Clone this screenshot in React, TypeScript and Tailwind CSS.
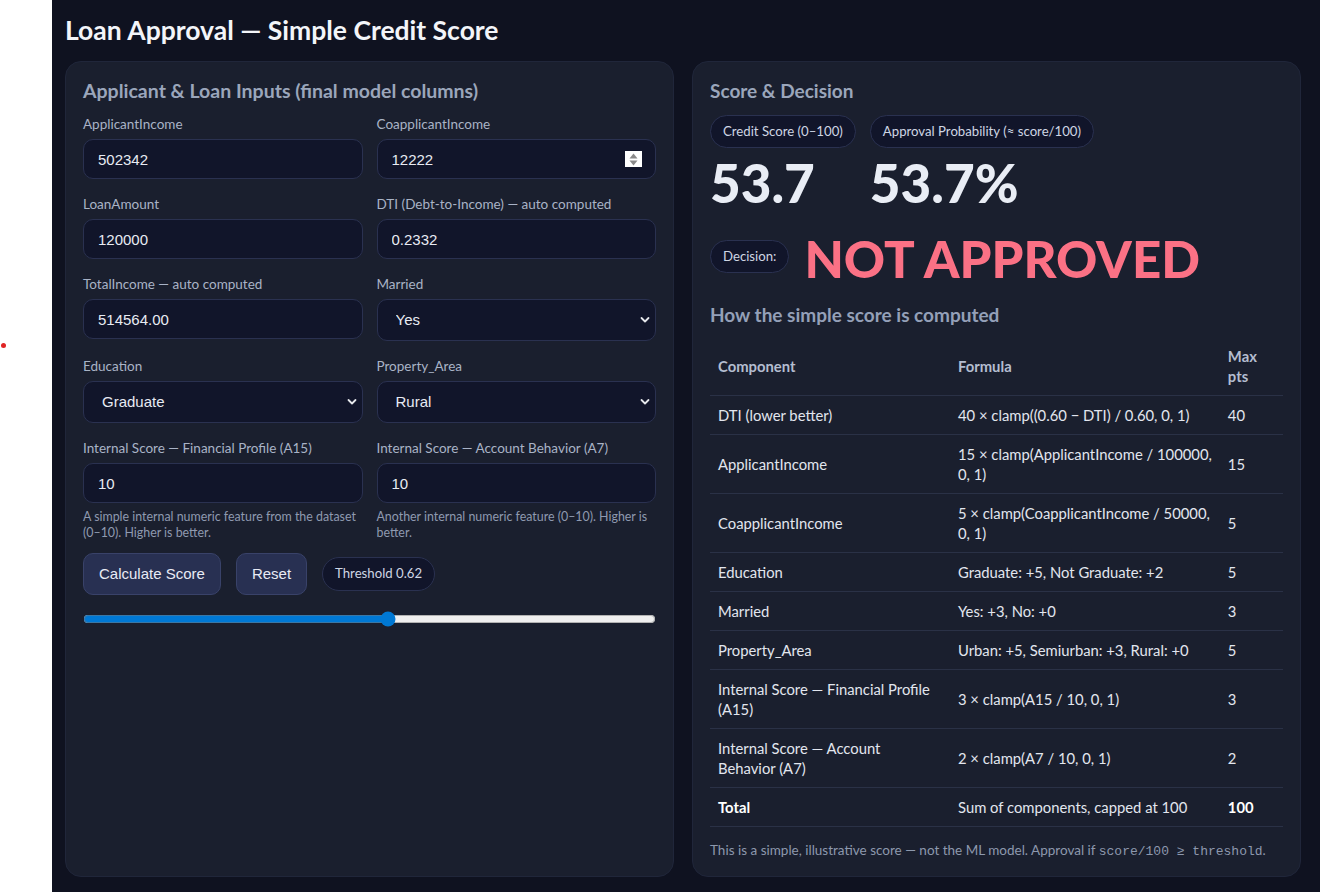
import { useState } from "react";

const sans = "font-['Lato','Noto_Sans',sans-serif]";
const ctrl = "font-['Liberation_Sans',Arial,sans-serif]";

const labelClass = "block text-[13.5px] leading-[18px] text-[#a9b3c6]";
const inputClass = `${ctrl} block h-10 w-full rounded-[10px] border border-[#2a3150] bg-[#11152a] px-[14px] text-[15px] text-[#e8ebf3] outline-none`;
const pillClass = "rounded-full border border-[#2a3150] bg-[#11152a] px-3 text-[13.2px] text-[#cfd6e4]";

const rows: { component: React.ReactNode; formula: React.ReactNode; max: string; total?: boolean }[] = [
  { component: "DTI (lower better)", formula: "40 × clamp((0.60 − DTI) / 0.60, 0, 1)", max: "40" },
  {
    component: "ApplicantIncome",
    formula: (
      <>
        15 × clamp(ApplicantIncome / 100000,
        <br />
        0, 1)
      </>
    ),
    max: "15",
  },
  {
    component: "CoapplicantIncome",
    formula: (
      <>
        5 × clamp(CoapplicantIncome / 50000,
        <br />
        0, 1)
      </>
    ),
    max: "5",
  },
  { component: "Education", formula: "Graduate: +5, Not Graduate: +2", max: "5" },
  { component: "Married", formula: "Yes: +3, No: +0", max: "3" },
  { component: "Property_Area", formula: "Urban: +5, Semiurban: +3, Rural: +0", max: "5" },
  {
    component: (
      <>
        Internal Score — Financial Profile
        <br />
        (A15)
      </>
    ),
    formula: "3 × clamp(A15 / 10, 0, 1)",
    max: "3",
  },
  {
    component: (
      <>
        Internal Score — Account
        <br />
        Behavior (A7)
      </>
    ),
    formula: "2 × clamp(A7 / 10, 0, 1)",
    max: "2",
  },
  { component: "Total", formula: "Sum of components, capped at 100", max: "100", total: true },
];

function Field({ label, children }: { label: string; children: React.ReactNode }) {
  return (
    <div>
      <label className={labelClass}>{label}</label>
      <div className="mt-1.5">{children}</div>
    </div>
  );
}

function Select({ value, options }: { value: string; options: string[] }) {
  return (
    <div className="relative">
      <select
        defaultValue={value}
        className={`${ctrl} block h-[42px] w-full appearance-none rounded-[10px] border border-[#2a3150] bg-[#11152a] pl-[18px] text-[15px] text-[#e8ebf3] outline-none`}
      >
        {options.map((o) => (
          <option key={o}>{o}</option>
        ))}
      </select>
      <svg
        className="pointer-events-none absolute right-[6px] top-1/2 -translate-y-1/2"
        width="10"
        height="7"
        viewBox="0 0 10 7"
        fill="none"
      >
        <path d="M1.5 1.5 5 5l3.5-3.5" stroke="#e5e7eb" strokeWidth="1.8" strokeLinecap="round" strokeLinejoin="round" />
      </svg>
    </div>
  );
}

export default function App() {
  const [threshold, setThreshold] = useState(0.62);

  return (
    <div className={`flex min-h-screen ${sans}`}>
      <div className="relative w-[52px] shrink-0 bg-white">
        <span className="absolute left-[1px] top-[343px] h-[5px] w-[5px] rounded-full bg-[#e02424]" />
      </div>

      <main className="flex-1 bg-[#0f1220] pb-[17px] pl-[13px] pr-[19px] pt-[15px]">
        <h1 className="text-[26.5px] font-bold leading-[30px] text-[#f3f5f9]">
          Loan Approval — Simple Credit Score
        </h1>

        <div className="mt-4 grid grid-cols-2 gap-[18px]">
          <section className="rounded-[16px] border border-[#20263a] bg-[#1a1f2e] p-[17px]">
            <h2 className="text-[19.5px] font-bold leading-6 text-[#9ba6bb]">
              Applicant &amp; Loan Inputs (final model columns)
            </h2>

            <div className="mt-3 grid grid-cols-2 items-start gap-x-[14px] gap-y-4">
              <Field label="ApplicantIncome">
                <input className={inputClass} defaultValue="502342" />
              </Field>
              <Field label="CoapplicantIncome">
                <div className="relative">
                  <input className={inputClass} defaultValue="12222" />
                  <span className="absolute right-[14px] top-1/2 flex h-4 w-[17px] -translate-y-1/2 items-center justify-center bg-white">
                    <svg width="9" height="13" viewBox="0 0 9 13">
                      <path d="M4.5 0.5 8.5 5.5H0.5Z" fill="#8a8a8a" />
                      <path d="M4.5 12.5 8.5 7.5H0.5Z" fill="#8a8a8a" />
                    </svg>
                  </span>
                </div>
              </Field>
              <Field label="LoanAmount">
                <input className={inputClass} defaultValue="120000" />
              </Field>
              <Field label="DTI (Debt-to-Income) — auto computed">
                <input className={inputClass} defaultValue="0.2332" readOnly />
              </Field>
              <Field label="TotalIncome — auto computed">
                <input className={inputClass} defaultValue="514564.00" readOnly />
              </Field>
              <Field label="Married">
                <Select value="Yes" options={["Yes", "No"]} />
              </Field>
              <Field label="Education">
                <Select value="Graduate" options={["Graduate", "Not Graduate"]} />
              </Field>
              <Field label="Property_Area">
                <Select value="Rural" options={["Urban", "Semiurban", "Rural"]} />
              </Field>
              <Field label="Internal Score — Financial Profile (A15)">
                <input className={inputClass} defaultValue="10" />
                <p className="mt-1.5 text-[12.4px] leading-4 text-[#8f9ab0]">
                  A simple internal numeric feature from the dataset (0–10). Higher is better.
                </p>
              </Field>
              <Field label="Internal Score — Account Behavior (A7)">
                <input className={inputClass} defaultValue="10" />
                <p className="mt-1.5 text-[12.4px] leading-4 text-[#8f9ab0]">
                  Another internal numeric feature (0–10). Higher is better.
                </p>
              </Field>
            </div>

            <div className="mt-3 flex items-center gap-[15px]">
              <button className={`${ctrl} h-[42px] rounded-[10px] border border-[#394269] bg-[#283052] px-[15px] text-[15px] text-[#e8ebf5]`}>
                Calculate Score
              </button>
              <button className={`${ctrl} h-[42px] rounded-[10px] border border-[#394269] bg-[#283052] px-[15px] text-[15px] text-[#e8ebf5]`}>
                Reset
              </button>
              <span className={`${pillClass} flex h-[34px] items-center`}>Threshold {threshold.toFixed(2)}</span>
            </div>

            <input
              type="range"
              min={0.3}
              max={0.9}
              step={0.01}
              value={threshold}
              onChange={(e) => setThreshold(Number(e.target.value))}
              className="mt-4 block w-full accent-[#0078d4]"
            />
          </section>

          <section className="rounded-[16px] border border-[#20263a] bg-[#1a1f2e] p-[17px]">
            <h2 className="text-[19px] font-bold leading-6 text-[#9ba6bb]">Score &amp; Decision</h2>

            <div className="mt-3 flex gap-[14px]">
              <div className="flex flex-col items-start">
                <span className={`${pillClass} py-[7px] leading-[17px]`}>Credit Score (0–100)</span>
                <div className="mt-2 text-[53px] font-black leading-none text-[#e9edf5]">53.7</div>
              </div>
              <div className="flex flex-col items-start">
                <span className={`${pillClass} py-[7px] leading-[17px]`}>Approval Probability (≈ score/100)</span>
                <div className="mt-2 text-[53px] font-black leading-none text-[#e9edf5]">53.7%</div>
              </div>
            </div>

            <div className="mt-[22px] flex items-center gap-[15px]">
              <span className={`${pillClass} py-[7px] leading-[17px]`}>Decision:</span>
              <span className="relative top-[2px] text-[51px] font-black leading-none text-[#fb7185]">NOT APPROVED</span>
            </div>

            <h3 className="mt-[22px] text-[19px] font-bold leading-[22px] text-[#94a0b8]">
              How the simple score is computed
            </h3>

            <table className="mt-[11px] w-full border-collapse text-left text-[14.8px] leading-5">
              <thead>
                <tr className="border-b border-[#2a3146] text-[#b4bdd0]">
                  <th className="w-[240px] px-2 py-[9px] font-bold">Component</th>
                  <th className="w-[269px] px-2 py-[9px] font-bold">Formula</th>
                  <th className="px-2 py-[9px] font-bold">
                    Max
                    <br />
                    pts
                  </th>
                </tr>
              </thead>
              <tbody className="text-[#e2e6ee]">
                {rows.map((r, i) => (
                  <tr key={i} className="border-b border-[#2a3146]">
                    <td className={`whitespace-nowrap px-2 py-[9px] ${r.total ? "font-bold text-white" : ""}`}>
                      {r.component}
                    </td>
                    <td className="whitespace-nowrap px-2 py-[9px]">{r.formula}</td>
                    <td className={`px-2 py-[9px] ${r.total ? "font-bold text-white" : ""}`}>{r.max}</td>
                  </tr>
                ))}
              </tbody>
            </table>

            <p className="mt-[14px] text-[13.5px] leading-[18px] text-[#8d98ad]">
              This is a simple, illustrative score — not the ML model. Approval if{" "}
              <code className="font-['Liberation_Mono',monospace] text-[13px] leading-none">score/100 ≥ threshold</code>.
            </p>
          </section>
        </div>
      </main>
    </div>
  );
}
